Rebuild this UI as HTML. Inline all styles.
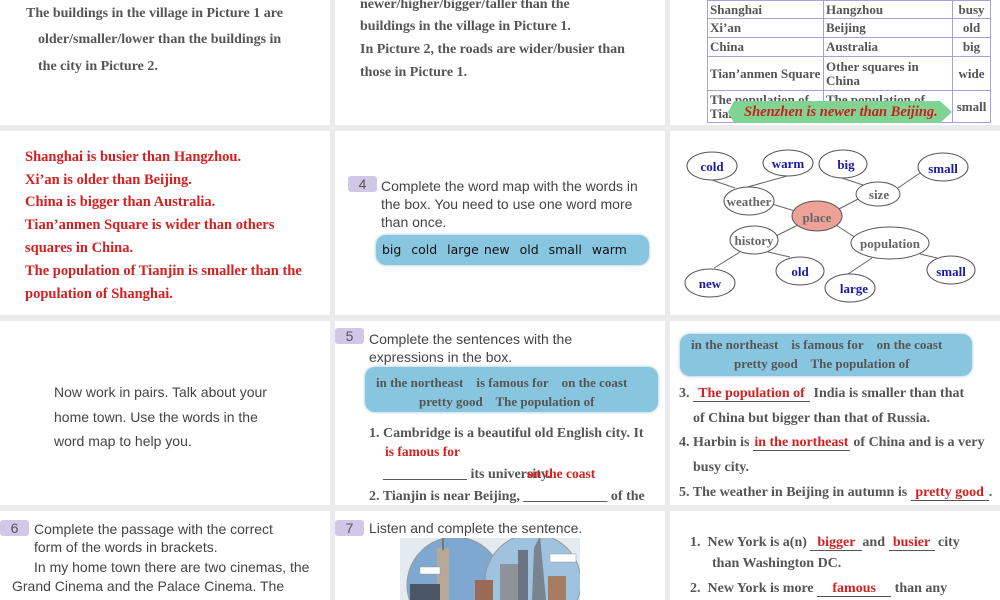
<!DOCTYPE html>
<html><head><meta charset="utf-8"><style>
*{margin:0;padding:0;box-sizing:border-box}
html,body{width:1000px;height:600px;overflow:hidden}
body{background:#ebebeb;position:relative;font-family:"Liberation Serif",serif}
.p{position:absolute;background:#fff;overflow:hidden}
.t{position:absolute;white-space:nowrap}
.s{font-family:"Liberation Serif",serif;font-weight:bold;color:#555;font-size:14px}
.r{font-family:"Liberation Serif",serif;font-weight:bold;color:#d42020;font-size:14.5px}
.a{font-family:"Liberation Sans",sans-serif;color:#444;font-size:14px}
.num{position:absolute;background:#cfc8e6;color:#555;font-family:"Liberation Sans",sans-serif;font-size:14px;text-align:center;border-radius:3px;width:29px;height:16px;line-height:16px}
.box{position:absolute;background:#88c6e0;border-radius:10px;box-shadow:0 0 3px #9bc}
.bl{font-family:"Liberation Serif",serif;font-weight:bold;color:#555;font-size:14px}
.u{display:inline-block;border-bottom:1px solid #555;text-align:center;color:#d42020;line-height:14px}
table{border-collapse:collapse;position:absolute;left:37px;top:0;font-family:"Liberation Serif",serif;font-weight:bold;color:#555;font-size:13px;table-layout:fixed}
td{border:1px solid #a9a0d8;padding:0 2px;line-height:14px;vertical-align:middle;overflow:hidden;white-space:nowrap}
</style></head><body>

<!-- row1 -->
<div class="p" style="left:0;top:0;width:330px;height:125px">
 <div class="t s" style="left:26px;top:6px">The buildings in the village in Picture 1 are</div>
 <div class="t s" style="left:38px;top:32px">older/smaller/lower than the buildings in</div>
 <div class="t s" style="left:38px;top:59px">the city in Picture 2.</div>
</div>
<div class="p" style="left:335px;top:0;width:330px;height:125px">
 <div class="t s" style="left:25px;top:-3px">newer/higher/bigger/taller than the</div>
 <div class="t s" style="left:25px;top:19px">buildings in the village in Picture 1.</div>
 <div class="t s" style="left:25px;top:42px">In Picture 2, the roads are wider/busier than</div>
 <div class="t s" style="left:25px;top:65px">those in Picture 1.</div>
</div>
<div class="p" style="left:670px;top:0;width:330px;height:125px">
 <table>
  <tr style="height:18px"><td style="width:116px">Shanghai</td><td style="width:129px">Hangzhou</td><td style="width:38px;text-align:center">busy</td></tr>
  <tr style="height:19px"><td>Xi’an</td><td>Beijing</td><td style="text-align:center">old</td></tr>
  <tr style="height:19px"><td>China</td><td>Australia</td><td style="text-align:center">big</td></tr>
  <tr style="height:34px"><td>Tian’anmen Square</td><td style="white-space:normal">Other squares in China</td><td style="text-align:center">wide</td></tr>
  <tr style="height:32px"><td style="vertical-align:top;padding-top:2px;white-space:normal"><div style="height:28px;overflow:hidden">The population of Tian</div></td><td style="vertical-align:top;padding-top:2px"><div style="height:28px;overflow:hidden">The population of</div></td><td style="text-align:center">small</td></tr>
 </table>
 <svg style="position:absolute;left:58px;top:100px" width="226" height="24"><polygon points="6,1 212,1 224,12 212,23 6,23 0,12" fill="#7fd393"/></svg>
 <div class="t" style="left:74px;top:104px;font-family:'Liberation Serif',serif;font-weight:bold;font-style:italic;color:#c8201c;font-size:14.5px">Shenzhen is newer than Beijing.</div>
</div>

<!-- row2 -->
<div class="p" style="left:0;top:131px;width:330px;height:184px">
 <div class="t r" style="left:25px;top:18px">Shanghai is busier than Hangzhou.</div>
 <div class="t r" style="left:25px;top:41px">Xi’an is older than Beijing.</div>
 <div class="t r" style="left:25px;top:63px">China is bigger than Australia.</div>
 <div class="t r" style="left:25px;top:86px">Tian’anmen Square is wider than others</div>
 <div class="t r" style="left:25px;top:109px">squares in China.</div>
 <div class="t r" style="left:25px;top:132px">The population of Tianjin is smaller than the</div>
 <div class="t r" style="left:25px;top:155px">population of Shanghai.</div>
</div>
<div class="p" style="left:335px;top:131px;width:330px;height:184px">
 <div class="num" style="left:13px;top:45px">4</div>
 <div class="t a" style="left:46px;top:47px">Complete the word map with the words in</div>
 <div class="t a" style="left:46px;top:65px">the box. You need to use one word more</div>
 <div class="t a" style="left:46px;top:83px">than once.</div>
 <div class="box" style="left:41px;top:104px;width:273px;height:30px"></div>
 <div class="t" style="left:47px;top:111px;font-family:'DejaVu Sans',sans-serif;font-size:12.5px;color:#111;word-spacing:1px">big&nbsp; cold&nbsp; large new&nbsp; old&nbsp; small&nbsp; warm</div>
</div>
<div class="p" style="left:670px;top:131px;width:330px;height:184px"></div>

<!-- row3 -->
<div class="p" style="left:0;top:321px;width:330px;height:184px">
 <div class="t a" style="left:54px;top:63px">Now work in pairs. Talk about your</div>
 <div class="t a" style="left:54px;top:88px">home town. Use the words in the</div>
 <div class="t a" style="left:54px;top:112px">word map to help you.</div>
</div>
<div class="p" style="left:335px;top:321px;width:330px;height:184px">
 <div class="num" style="left:0;top:7px;width:29px">5</div>
 <div class="t a" style="left:34px;top:10px">Complete the sentences with the</div>
 <div class="t a" style="left:34px;top:28px">expressions in the box.</div>
 <div class="box" style="left:30px;top:46px;width:293px;height:45px"></div>
 <div class="t bl" style="left:41px;top:54px;font-size:13px">in the northeast&nbsp;&nbsp;&nbsp; is famous for&nbsp;&nbsp;&nbsp; on the coast</div>
 <div class="t bl" style="left:84px;top:73px;font-size:13px">pretty good&nbsp;&nbsp;&nbsp; The population of</div>
 <div class="t bl" style="left:34px;top:105px">1. Cambridge is a beautiful old English city. It</div>
 <div class="t r" style="left:50px;top:123px;font-size:13.5px">is famous for</div>
 <div class="t bl" style="left:48px;top:146px">____________ its university.</div>
 <div class="t r" style="left:192px;top:145px;font-size:13.5px">on the coast</div>
 <div class="t bl" style="left:34px;top:168px">2. Tianjin is near Beijing, ____________ of the</div>
</div>
<div class="p" style="left:670px;top:321px;width:330px;height:184px">
 <div class="box" style="left:10px;top:13px;width:292px;height:42px"></div>
 <div class="t bl" style="left:21px;top:16px;font-size:13px">in the northeast&nbsp;&nbsp;&nbsp; is famous for&nbsp;&nbsp;&nbsp; on the coast</div>
 <div class="t bl" style="left:64px;top:35px;font-size:13px">pretty good&nbsp;&nbsp;&nbsp; The population of</div>
 <div class="t bl" style="left:9px;top:65px">3. <span class="u" style="width:117px">The population of</span> India is smaller than that</div>
 <div class="t bl" style="left:23px;top:90px">of China but bigger than that of Russia.</div>
 <div class="t bl" style="left:9px;top:114px">4. Harbin is <span class="u" style="width:97px">in the northeast</span> of China and is a very</div>
 <div class="t bl" style="left:23px;top:139px">busy city.</div>
 <div class="t bl" style="left:9px;top:164px">5. The weather in Beijing in autumn is <span class="u" style="width:78px">pretty good</span>.</div>
</div>

<!-- row4 -->
<div class="p" style="left:0;top:511px;width:330px;height:89px">
 <div class="num" style="left:0;top:9px;width:29px">6</div>
 <div class="t a" style="left:34px;top:10px">Complete the passage with the correct</div>
 <div class="t a" style="left:34px;top:28px">form of the words in brackets.</div>
 <div class="t a" style="left:34px;top:48px">In my home town there are two cinemas, the</div>
 <div class="t a" style="left:12px;top:67px">Grand Cinema and the Palace Cinema. The</div>
</div>
<div class="p" style="left:335px;top:511px;width:330px;height:89px">
 <div class="num" style="left:0;top:9px;width:29px">7</div>
 <div class="t a" style="left:34px;top:9px">Listen and complete the sentence.</div>
 <svg style="position:absolute;left:65px;top:27px" width="180" height="62">
  <rect width="180" height="62" fill="#e4ebf0"/>
  <circle cx="55" cy="47" r="48" fill="#7ea8cf" stroke="#999"/>
  <circle cx="133" cy="44" r="48" fill="#9fc3de" stroke="#999"/>
  <rect x="37" y="10" width="12" height="52" fill="#b8a898"/>
  <rect x="42" y="0" width="2" height="12" fill="#777"/>
  <rect x="10" y="46" width="30" height="16" fill="#4a5566"/>
  <rect x="75" y="42" width="18" height="20" fill="#9a6a55"/>
  <rect x="100" y="26" width="18" height="36" fill="#8d9399"/>
  <rect x="118" y="12" width="10" height="50" fill="#6b7480"/>
  <polygon points="132,62 134,10 140,-2 146,62" fill="#7a8490"/>
  <rect x="148" y="38" width="18" height="24" fill="#a87c60"/>
  <rect x="20" y="29" width="20" height="7" fill="#fff" stroke="#999" stroke-width=".5"/>
  <rect x="150" y="16" width="26" height="8" fill="#fff" stroke="#999" stroke-width=".5"/>
 </svg>
</div>
<div class="p" style="left:670px;top:511px;width:330px;height:89px">
 <div class="t bl" style="left:20px;top:24px">1.&nbsp; New York is a(n) <span class="u" style="width:52px">bigger</span>and <span class="u" style="width:46px">busier</span> city</div>
 <div class="t bl" style="left:42px;top:45px">than Washington DC.</div>
 <div class="t bl" style="left:20px;top:70px">2.&nbsp; New York is more <span class="u" style="width:74px">famous</span> than any</div>
</div>

<!-- word map -->
<svg style="position:absolute;left:0;top:0" width="1000" height="600" font-family="Liberation Serif,serif" font-weight="bold" font-size="13" text-anchor="middle">
 <g stroke="#666" stroke-width="1">
  <line x1="712" y1="180" x2="735" y2="188"/><line x1="787" y1="176" x2="744" y2="188"/>
  <line x1="772" y1="204" x2="795" y2="211"/><line x1="842" y1="178" x2="866" y2="186"/>
  <line x1="898" y1="188" x2="920" y2="173"/><line x1="837" y1="210" x2="860" y2="198"/>
  <line x1="798" y1="225" x2="776" y2="236"/><line x1="836" y1="225" x2="856" y2="238"/>
  <line x1="740" y1="252" x2="714" y2="268"/><line x1="768" y1="252" x2="790" y2="257"/>
  <line x1="872" y1="258" x2="848" y2="274"/><line x1="920" y1="254" x2="937" y2="258"/>
 </g>
 <g fill="#fff" stroke="#555" stroke-width="1">
  <ellipse cx="712" cy="166" rx="25" ry="14"/><ellipse cx="788" cy="163" rx="25" ry="13"/>
  <ellipse cx="843" cy="164" rx="24" ry="14"/><ellipse cx="943" cy="167" rx="25" ry="14"/>
  <ellipse cx="749" cy="201" rx="25" ry="14"/><ellipse cx="878" cy="194" rx="22" ry="12"/>
  <ellipse cx="817" cy="216" rx="25" ry="15" fill="#eda197"/>
  <ellipse cx="754" cy="240" rx="24" ry="14"/><ellipse cx="890" cy="243" rx="39" ry="16"/>
  <ellipse cx="800" cy="271" rx="24" ry="14"/><ellipse cx="951" cy="270" rx="24" ry="14"/>
  <ellipse cx="710" cy="283" rx="25" ry="14"/><ellipse cx="850" cy="288" rx="25" ry="14"/>
 </g>
 <g fill="#1a1aa8">
  <text x="712" y="171">cold</text><text x="788" y="168">warm</text><text x="846" y="169">big</text>
  <text x="943" y="173">small</text><text x="800" y="276">old</text><text x="951" y="276">small</text>
  <text x="710" y="288">new</text><text x="854" y="293">large</text>
 </g>
 <g fill="#666">
  <text x="749" y="206">weather</text><text x="879" y="199">size</text><text x="817" y="222">place</text>
  <text x="754" y="245">history</text><text x="890" y="248">population</text>
 </g>
</svg>
</body></html>
